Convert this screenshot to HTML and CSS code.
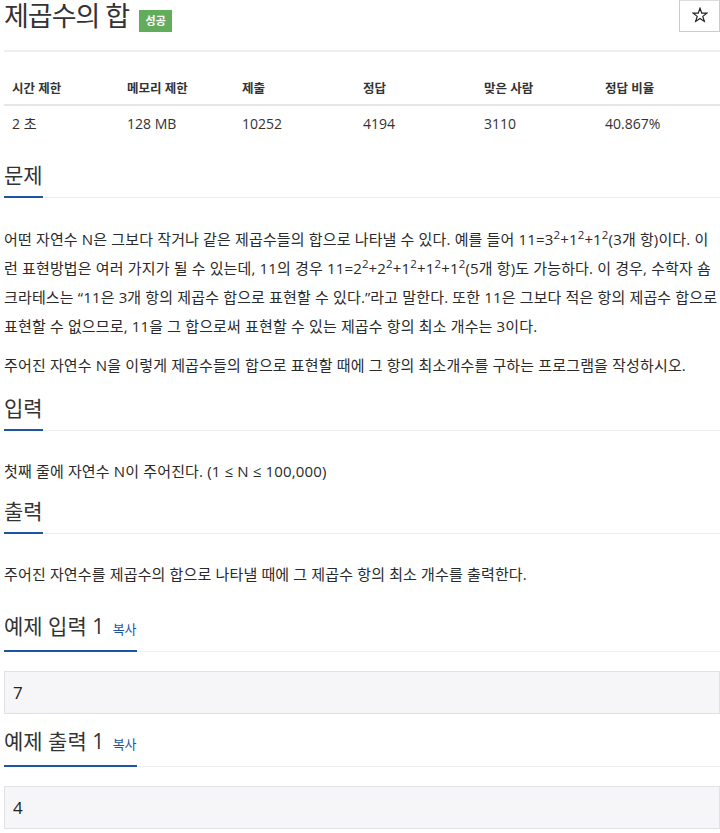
FILE: index.html
```html
<!DOCTYPE html>
<html lang="ko">
<head>
<meta charset="utf-8">
<link rel="stylesheet" href="styles.css">
</head>
<body>
<div class="page">
  <div class="title-row">
    <h1 class="title"><span class="title-text">제곱수의 합</span><span class="badge">성공</span></h1>
    <div class="star"><svg class="star-icon" viewBox="0 0 16 16" width="16" height="16"><path d="M8 1.2 L9.75 6.1 L14.9 6.2 L10.8 9.35 L12.3 14.4 L8 11.4 L3.7 14.4 L5.2 9.35 L1.1 6.2 L6.25 6.1 Z" fill="none" stroke="#222" stroke-width="1.2" stroke-linejoin="miter"/></svg></div>
  </div>
  <hr class="rule">
  <div class="info">
    <div class="info-head">
      <div>시간 제한</div><div>메모리 제한</div><div>제출</div><div>정답</div><div>맞은 사람</div><div>정답 비율</div>
    </div>
    <div class="info-row">
      <div>2 초</div><div>128 MB</div><div>10252</div><div>4194</div><div>3110</div><div>40.867%</div>
    </div>
  </div>

  <section class="sec sec-problem">
    <h2 class="headline"><span class="hl">문제</span></h2>
    <div class="body">
      <p class="p1">어떤 자연수 N은 그보다 작거나 같은 제곱수들의 합으로 나타낼 수 있다. 예를 들어 11=3<sup>2</sup>+1<sup>2</sup>+1<sup>2</sup>(3개 항)이다. 이<br>런 표현방법은 여러 가지가 될 수 있는데, 11의 경우 11=2<sup>2</sup>+2<sup>2</sup>+1<sup>2</sup>+1<sup>2</sup>+1<sup>2</sup>(5개 항)도 가능하다. 이 경우, 수학자 숌<br>크라테스는 “11은 3개 항의 제곱수 합으로 표현할 수 있다.”라고 말한다. 또한 11은 그보다 적은 항의 제곱수 합으로<br>표현할 수 없으므로, 11을 그 합으로써 표현할 수 있는 제곱수 항의 최소 개수는 3이다.</p>
      <p>주어진 자연수 N을 이렇게 제곱수들의 합으로 표현할 때에 그 항의 최소개수를 구하는 프로그램을 작성하시오.</p>
    </div>
  </section>

  <section class="sec sec-input">
    <h2 class="headline"><span class="hl">입력</span></h2>
    <div class="body">
      <p>첫째 줄에 자연수 N이 주어진다. (1 <span class="le">≤</span> N <span class="le">≤</span> 100,000)</p>
    </div>
  </section>

  <section class="sec sec-output">
    <h2 class="headline"><span class="hl">출력</span></h2>
    <div class="body">
      <p>주어진 자연수를 제곱수의 합으로 나타낼 때에 그 제곱수 항의 최소 개수를 출력한다.</p>
    </div>
  </section>

  <section class="sec sec-sample1">
    <h2 class="headline"><span class="hl">예제 입력 1 <span class="copy">복사</span></span></h2>
    <pre class="sample">7</pre>
  </section>

  <section class="sec sec-sample2">
    <h2 class="headline"><span class="hl">예제 출력 1 <span class="copy">복사</span></span></h2>
    <pre class="sample">4</pre>
  </section>
</div>
</body>
</html>
```

FILE: styles.css
```css
html, body {
  margin: 0;
  padding: 0;
  background: #fff;
}
body {
  font-family: "Open Sans", "Noto Sans CJK KR", sans-serif;
  color: #333;
}
.page {
  padding: 0 0 0 4px;
}
.title-row {
  display: flex;
  justify-content: space-between;
  align-items: flex-start;
  height: 31px;
}
.title {
  margin: 0;
  display: flex;
  align-items: flex-start;
  font-weight: normal;
}
.title-text {
  font-size: 27px;
  line-height: 31px;
  letter-spacing: -1px;
  color: #333;
}
.badge {
  margin-left: 10px;
  margin-top: 10px;
  width: 33px;
  height: 22px;
  background: #62ad5c;
  color: #fff;
  font-size: 11px;
  font-weight: bold;
  line-height: 22px;
  text-align: center;
}
.star {
  width: 39px;
  height: 30px;
  border: 1px solid #ccc;
  border-top-color: #ddd;
  background: #fff;
  display: flex;
  align-items: center;
  justify-content: center;
}
.star-icon {
  display: block;
  margin-top: -3px;
}
.rule {
  border: 0;
  border-top: 2px solid #eee;
  margin: 19px 0 0;
}
.info {
  margin-top: 18px;
}
.info-head, .info-row {
  display: grid;
  grid-template-columns: 115px 115px 121px 121px 121px 1fr;
}
.info-head {
  height: 34px;
  align-items: center;
  font-size: 12.5px;
  font-weight: bold;
  border-bottom: 2px solid #e6e6e6;
}
.info-row {
  height: 34px;
  align-items: center;
  font-size: 14px;
}
.info-head > div, .info-row > div {
  padding-left: 8px;
}
.sec {
  margin-top: 11px;
}
.sec-problem { margin-top: 18px; }
.sec-output { margin-top: 8px; }
.sec-sample1 { margin-top: 20px; }
.sec-sample2 { margin-top: 10px; }
.headline {
  margin: 0;
  display: flex;
  border-bottom: 1px solid #eee;
  font-weight: normal;
}
.hl {
  display: inline-block;
  font-size: 21px;
  line-height: 34px;
  padding-bottom: 4px;
  border-bottom: 2px solid #1d55a5;
  margin-bottom: -1px;
  color: #333;
}
.copy {
  font-size: 13px;
  color: #1d55a5;
  margin-left: 3px;
}
.body {
  margin-top: 26px;
}
.sec-problem .body {
  margin-top: 27px;
}
.body p {
  margin: 0 0 10px;
  font-size: 15px;
  line-height: 29px;
  letter-spacing: 0.15px;
  color: #2a2a2a;
}
.body p:last-child {
  margin-bottom: 0;
}
.le {
  line-height: 0;
}
sup {
  font-size: 11.5px;
  line-height: 0;
  vertical-align: 6px;
}
.sample {
  margin: 19px 0 0;
  height: 43px;
  box-sizing: border-box;
  background: #f6f6f8;
  border: 1px solid #e1e1e8;
  padding: 0 0 0 8px;
  font-family: "Open Sans", sans-serif;
  font-size: 17px;
  line-height: 41px;
  color: #222;
}
```
